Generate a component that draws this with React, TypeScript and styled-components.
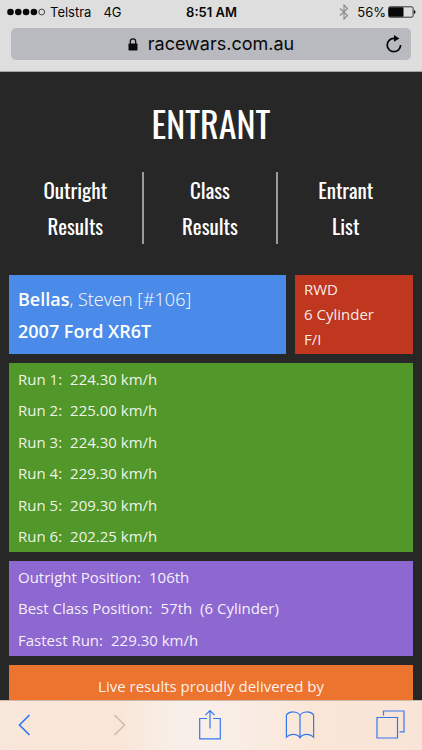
import React from "react";
import styled, { createGlobalStyle, css } from "styled-components";

const GlobalStyle = createGlobalStyle`
  *, *::before, *::after { box-sizing: border-box; }
  body { margin: 0; background: #272727; }
`;

const Screen = styled.div`
  display: flex;
  flex-direction: column;
  height: 100vh;
  overflow: hidden;
  background: #272727;
  color: #fff;
  font-family: "Open Sans", "Noto Sans", sans-serif;
`;

const BrowserHeader = styled.header`
  flex: none;
  height: 72px;
  background: #dedede;
  color: #080808;
  font-family: Inter, "Liberation Sans", sans-serif;
  border-bottom: 1px solid #a5a5a5;
`;

const StatusBar = styled.div`
  display: grid;
  grid-template-columns: 1fr auto 1fr;
  align-items: center;
  height: 24px;
  padding: 0 6px 0 7px;
  font-size: 13px;
  line-height: 24px;
`;

const StatusGroup = styled.div<{ $end?: boolean }>`
  display: flex;
  align-items: center;
  gap: ${(p) => (p.$end ? "8px" : "12px")};
  justify-content: ${(p) => (p.$end ? "flex-end" : "flex-start")};
`;

const Carrier = styled.span`
  display: flex;
  align-items: center;
  gap: 5px;
`;

const Battery = styled.span`
  display: flex;
  align-items: center;
  gap: 2px;
`;

const Clock = styled.time`
  font-weight: 600;
`;

const AddressBar = styled.div`
  display: grid;
  grid-template-columns: 24px 1fr 24px;
  align-items: center;
  height: 32px;
  margin: 4px 11px 0;
  padding: 0 5px;
  border-radius: 5px;
  background: #b9babf;
`;

const Address = styled.a`
  grid-column: 2;
  display: flex;
  align-items: center;
  justify-content: center;
  gap: 10px;
  color: inherit;
  font-size: 18px;
  line-height: 32px;
  text-decoration: none;
`;

const IconButton = styled.button`
  display: flex;
  align-items: center;
  justify-content: center;
  padding: 0;
  border: 0;
  background: none;
  color: inherit;
`;

const Page = styled.main`
  flex: 1;
  min-height: 0;
  overflow: hidden;
  padding: 0 9px;
`;

const narrow = css`
  font-family: Oswald, "Liberation Sans Narrow", "Roboto Condensed", "Open Sans", sans-serif;
  font-weight: 400;
`;

const Title = styled.h1`
  ${narrow}
  margin: 0;
  padding-top: 28px;
  font-size: 36px;
  line-height: 46px;
  text-align: center;
`;

const Nav = styled.nav`
  display: grid;
  grid-template-columns: repeat(3, 1fr);
  margin: 26px 0 31px;
`;

const NavLink = styled.a`
  ${narrow}
  padding: 0 32px;
  color: #fff;
  font-size: 21px;
  line-height: 36px;
  text-align: center;
  text-decoration: none;

  &:not(:last-child) { border-right: 2px solid #9b9b9b; }
`;

const Panels = styled.div`
  display: grid;
  grid-template-columns: 277fr 118fr;
  gap: 9px;
`;

const tones = {
  blue: "#4a8ae8",
  red: "#be371e",
  green: "#52972a",
  purple: "#8e68d1",
  orange: "#ec742f",
};

const Panel = styled.section<{ $tone: keyof typeof tones; $wide?: boolean }>`
  background: ${(p) => tones[p.$tone]};
  padding: 0 9px;
  color: rgba(255, 255, 255, 0.92);
  font-size: 15px;
  ${(p) => p.$wide && "grid-column: 1 / -1;"}
`;

const Driver = styled(Panel)`
  padding: 8px 9px 7px;
  color: #fff;
  font-size: 18px;
  line-height: 32px;
`;

const Surname = styled.strong`
  font-weight: 600;
`;

const DriverName = styled.div`
  font-weight: 300;
`;

const Car = styled.div`
  font-weight: 600;
`;

const Spec = styled(Panel)`
  padding: 2px 9px;
  line-height: 25px;
`;

const Facts = styled.dl<{ $height: number }>`
  display: grid;
  grid-auto-rows: 1fr;
  min-height: ${(p) => p.$height}px;
  margin: 0;
`;

const Fact = styled.div`
  display: flex;
  align-items: center;
  gap: 8px;
`;

const Value = styled.dd`
  margin: 0;
  white-space: pre;
`;

const Sponsor = styled(Panel)`
  padding: 6px 9px;
  line-height: 31px;
  text-align: center;
`;

const Toolbar = styled.nav`
  flex: none;
  display: flex;
  align-items: center;
  justify-content: space-between;
  height: 50px;
  padding: 0 18px 2px 16px;
  border-top: 1px solid #cfb8a8;
  background: linear-gradient(90deg, #f7e7da 0%, #fae6d7 28%, #f8efe9 42%, #f9eee7 54%, #fae6d7 75%, #f8e5d8 100%);
  color: #3478f0;
`;

const ToolButton = styled(IconButton)`
  width: 28px;

  &:first-child { justify-content: flex-start; }
  svg { flex: none; }
`;

const runs = ["224.30", "225.00", "224.30", "229.30", "209.30", "202.25"];

const positions = [
  ["Outright Position:", "106th"],
  ["Best Class Position:", "57th  (6 Cylinder)"],
  ["Fastest Run:", "229.30 km/h"],
];

const SignalDots = () => (
  <svg width="38" height="8" viewBox="0 0 38 8" aria-hidden="true">
    {[3.5, 11.3, 19.1, 26.9].map((x) => (
      <circle key={x} cx={x} cy="4" r="3.3" fill="currentColor" />
    ))}
    <circle cx="34.7" cy="4" r="2.9" fill="none" stroke="currentColor" strokeWidth=".7" />
  </svg>
);

const BluetoothIcon = () => (
  <svg width="10" height="16" viewBox="0 0 10 16" fill="none" stroke="#8d8d8d" strokeWidth="1.2" aria-label="Bluetooth">
    <path d="M1 4.5 8.5 11.5 5 15V1l3.5 3.5L1 11.5" />
  </svg>
);

const BatteryIcon = () => (
  <svg width="28" height="12" viewBox="0 0 28 12" aria-hidden="true">
    <rect x=".5" y=".8" width="24.6" height="10.4" rx="1.6" fill="none" stroke="currentColor" strokeWidth=".8" />
    <rect x="1" y="1.3" width="14.5" height="9.4" rx=".8" fill="currentColor" />
    <path d="M26 4q1.5.6 1.5 2T26 8z" fill="currentColor" />
  </svg>
);

const LockIcon = () => (
  <svg width="10" height="13" viewBox="0 0 10 13" aria-hidden="true">
    <rect x=".5" y="5.5" width="9" height="7" rx=".8" fill="currentColor" />
    <path d="M2.3 6V3.5a2.7 2.7 0 0 1 5.4 0V6" fill="none" stroke="currentColor" strokeWidth="1.2" />
  </svg>
);

const ReloadIcon = () => (
  <svg width="18" height="18" viewBox="0 0 18 18" aria-hidden="true">
    <path d="M10 3.3H8.8a6.7 6.7 0 1 0 6.8 6.8" fill="none" stroke="currentColor" strokeWidth="1.7" />
    <path d="M9 0 14.4 3.4 9 6.8z" fill="currentColor" />
  </svg>
);

const BackIcon = () => (
  <svg width="16" height="24" viewBox="0 0 16 24" fill="none" stroke="currentColor" strokeWidth="1.7">
    <path d="M13.5 2 3.5 12l10 10" />
  </svg>
);

const ForwardIcon = () => (
  <svg width="16" height="24" viewBox="0 0 16 24" fill="none" stroke="#cbbdb3" strokeWidth="1.6">
    <path d="M2.5 2 12.5 12l-10 10" />
  </svg>
);

const ShareIcon = () => (
  <svg width="24" height="32" viewBox="0 0 24 32" fill="none" stroke="currentColor" strokeWidth="1.2">
    <path d="M9 9.5H1.7v20.3h20.6V9.5H15M12 19.500V1.500M7.400 6.100 12 1.500l4.600 4.600" />
  </svg>
);

const BookIcon = () => (
  <svg width="30" height="30" viewBox="0 0 30 30" fill="none" stroke="currentColor" strokeWidth="1.2">
    <path d="M15 5.500C12.500.9 4.500.9 1.400 4.900v22.300C5 23.400 12 23.500 15 27.800c3-4.300 10-4.400 13.600-.6V4.900C25.500.9 17.500.9 15 5.500V28" />
  </svg>
);

const TabsIcon = () => (
  <svg width="29" height="29" viewBox="0 0 29 29" fill="none" stroke="currentColor" strokeWidth="1.2">
    <path d="M1 7.5h20.500V28H1zM7.500 5.500V1H28v20.800h-4.500" />
  </svg>
);

export default function App() {
  return (
    <Screen>
      <GlobalStyle />
      <BrowserHeader>
        <StatusBar>
          <StatusGroup>
            <Carrier>
              <SignalDots />
              Telstra
            </Carrier>
            <span>4G</span>
          </StatusGroup>
          <Clock>8:51 AM</Clock>
          <StatusGroup $end>
            <BluetoothIcon />
            <Battery>
              56%
              <BatteryIcon />
            </Battery>
          </StatusGroup>
        </StatusBar>
        <AddressBar>
          <Address href="#">
            <LockIcon />
            racewars.com.au
          </Address>
          <IconButton aria-label="Reload">
            <ReloadIcon />
          </IconButton>
        </AddressBar>
      </BrowserHeader>

      <Page>
        <Title>ENTRANT</Title>
        <Nav aria-label="Results">
          <NavLink href="#outright">Outright Results</NavLink>
          <NavLink href="#class">Class Results</NavLink>
          <NavLink href="#entrants">Entrant List</NavLink>
        </Nav>
        <Panels>
          <Driver $tone="blue">
            <DriverName>
              <Surname>Bellas</Surname>, Steven [#106]
            </DriverName>
            <Car>2007 Ford XR6T</Car>
          </Driver>
          <Spec $tone="red">
            <div>RWD</div>
            <div>6 Cylinder</div>
            <div>F/I</div>
          </Spec>
          <Panel $tone="green" $wide>
            <Facts $height={189}>
              {runs.map((speed, i) => (
                <Fact key={i}>
                  <dt>Run {i + 1}:</dt>
                  <Value>{speed} km/h</Value>
                </Fact>
              ))}
            </Facts>
          </Panel>
          <Panel $tone="purple" $wide>
            <Facts $height={95}>
              {positions.map(([label, value]) => (
                <Fact key={label}>
                  <dt>{label}</dt>
                  <Value>{value}</Value>
                </Fact>
              ))}
            </Facts>
          </Panel>
          <Sponsor $tone="orange" $wide>
            Live results proudly delivered by
          </Sponsor>
        </Panels>
      </Page>

      <Toolbar aria-label="Browser">
        <ToolButton aria-label="Back"><BackIcon /></ToolButton>
        <ToolButton aria-label="Forward"><ForwardIcon /></ToolButton>
        <ToolButton aria-label="Share"><ShareIcon /></ToolButton>
        <ToolButton aria-label="Bookmarks"><BookIcon /></ToolButton>
        <ToolButton aria-label="Tabs"><TabsIcon /></ToolButton>
      </Toolbar>
    </Screen>
  );
}
